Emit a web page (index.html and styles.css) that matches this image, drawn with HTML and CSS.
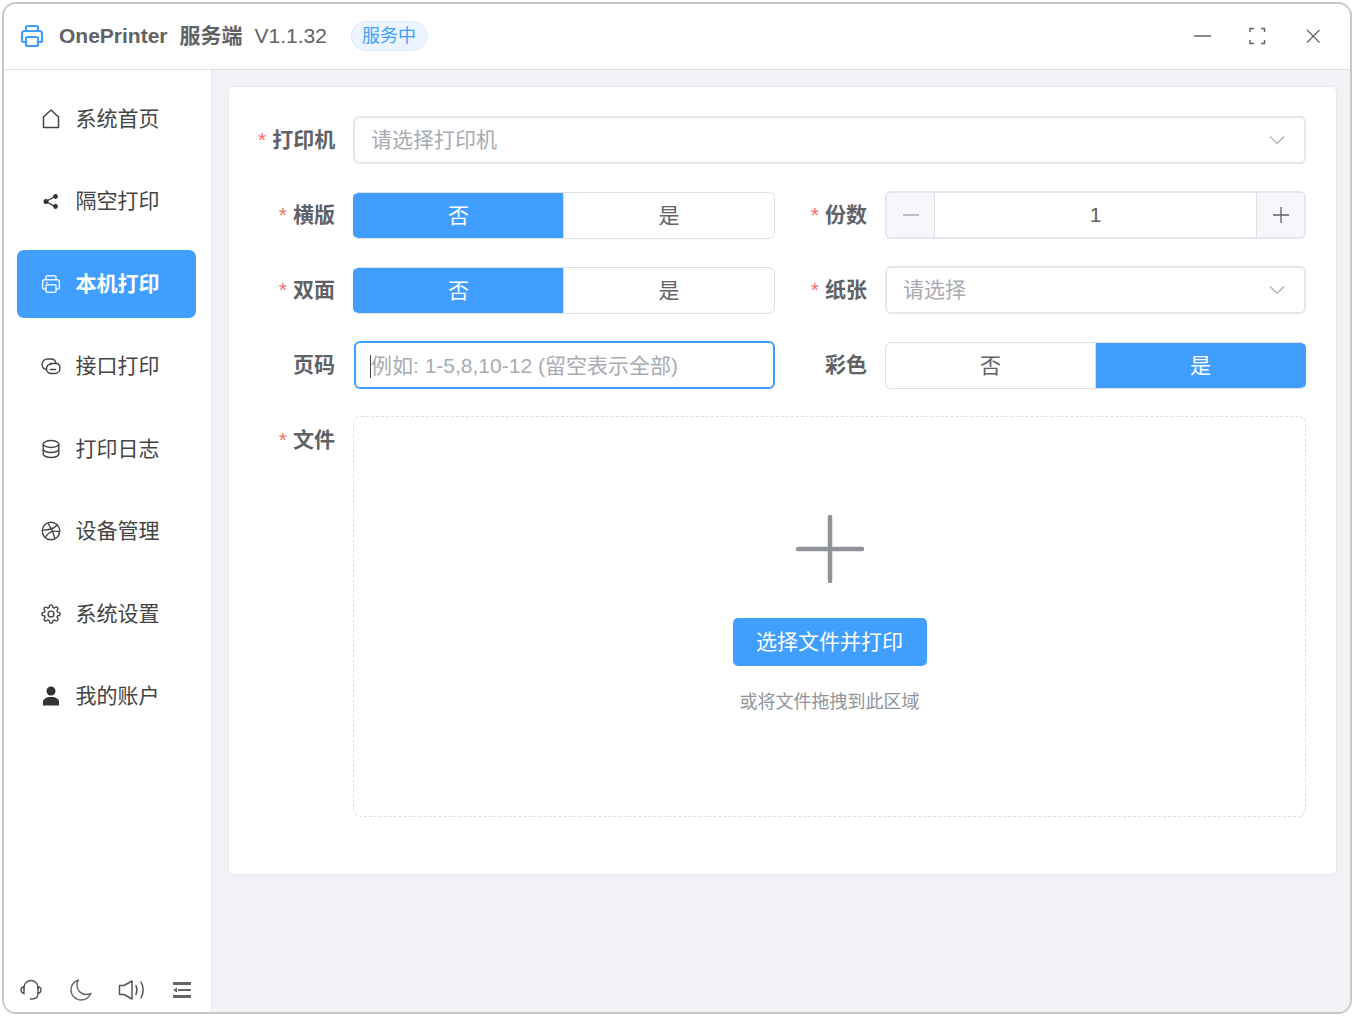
FILE: index.html
```html
<!DOCTYPE html>
<html lang="zh-CN">
<head>
  <meta charset="UTF-8">
  <meta name="viewport" content="width=device-width, initial-scale=1.0">
  <title>OnePrinter 服务端</title>
  <link rel="stylesheet" href="styles.css">
</head>
<body>
  <div class="window">
    <header class="titlebar">
      <svg class="logo" viewBox="0 0 24 24" fill="none" stroke="#409eff" stroke-width="2.2" stroke-linejoin="round" stroke-linecap="round">
        <path d="M6 7V3.500C6 2.700 6.700 2 7.500 2h9c.8 0 1.500.7 1.500 1.500V7"/>
        <path d="M6 18H3.500C2.700 18 2 17.300 2 16.500v-7C2 8.100 3.100 7 4.500 7h15C20.900 7 22 8.100 22 9.500v7c0 .8-.7 1.500-1.500 1.500H18"/>
        <rect x="6" y="13" width="12" height="9" rx="1.500"/>
      </svg>
      <span class="app-name">OnePrinter</span>
      <span class="app-name">服务端</span>
      <span class="version">V1.1.32</span>
      <span class="status-tag">服务中</span>
      <div class="win-controls">
        <svg viewBox="0 0 20 20" fill="none" stroke="#666" stroke-width="1.300"><path d="M3 10h17"/></svg>
        <svg viewBox="0 0 20 20" fill="none" stroke="#666" stroke-width="1.500"><path d="M3 6V2.500h4M14 2.500h3.500V6M17.500 14v3.500H14M7 17.500H3V14"/></svg>
        <svg viewBox="0 0 20 20" fill="none" stroke="#666" stroke-width="1.300"><path d="M4 4l12.500 12.500M16.500 4L4 16.500"/></svg>
      </div>
    </header>

    <div class="body">
      <aside class="sidebar">
        <nav class="nav">
          <a class="nav-item">
            <svg class="nav-icon" viewBox="0 0 20 20" fill="none" stroke="#444" stroke-width="1.500" stroke-linejoin="round"><path d="M2.500 8L10 1l7.500 7v10.500h-15z"/></svg>
            系统首页
          </a>
          <a class="nav-item">
            <svg class="nav-icon" viewBox="0 0 20 20" fill="#333" stroke="#333" stroke-width="1.400"><path d="M14 5.500l-9 5 9 5" fill="none"/><circle cx="14.500" cy="5.500" r="1.700"/><circle cx="5" cy="10.500" r="1.800"/><circle cx="14.500" cy="15.500" r="1.700"/></svg>
            隔空打印
          </a>
          <a class="nav-item active">
            <svg class="nav-icon" viewBox="0 0 24 24" fill="none" stroke="#fff" stroke-opacity=".85" stroke-width="1.800" stroke-linejoin="round"><path d="M6 7V3.500C6 2.700 6.700 2 7.500 2h9c.8 0 1.500.7 1.500 1.500V7"/><path d="M6 18H3.500C2.700 18 2 17.300 2 16.500v-7C2 8.100 3.100 7 4.500 7h15C20.900 7 22 8.100 22 9.500v7c0 .8-.7 1.500-1.500 1.500H18"/><rect x="6" y="13" width="12" height="9" rx="1.500"/><path d="M6 10.500h2"/></svg>
            本机打印
          </a>
          <a class="nav-item">
            <svg class="nav-icon" viewBox="0 0 20 20" fill="none" stroke="#444" stroke-width="1.400" stroke-linecap="round"><path d="M5.500 13.500C3 13 1 11 1 8.200 1 5.200 3.500 3 6.500 3h3.500c2.500 0 4.300 1.500 4.800 3.800"/><path d="M9 7.500h6c2.300 0 4 2 4 4.800 0 3-2.200 5.200-5 5.200h-3.500C7.500 17.500 5.500 15.500 5.500 13c0-2.600 1.800-4.700 4.500-4.800"/><path d="M9.500 13.500h5"/></svg>
            接口打印
          </a>
          <a class="nav-item">
            <svg class="nav-icon" viewBox="0 0 20 20" fill="none" stroke="#444" stroke-width="1.400"><ellipse cx="10" cy="5" rx="7.800" ry="3.500"/><path d="M2.200 5v10c0 2 3.500 3.500 7.800 3.500s7.800-1.500 7.800-3.500V5"/><path d="M2.200 10c0 2 3.500 3.500 7.800 3.500s7.800-1.500 7.800-3.500"/></svg>
            打印日志
          </a>
          <a class="nav-item">
            <svg class="nav-icon" viewBox="0 0 24 24" fill="none" stroke="#444" stroke-width="1.700"><circle cx="12" cy="12" r="10.500"/><path d="M8.560 2.750c4.370 6.030 6.020 9.420 8.030 17.720m2.540-15.380c-3.720 4.350-8.940 5.660-16.880 5.850m19.500 1.900c-3.500-.93-6.630-.82-8.940 0-2.580.92-5.010 2.860-7.440 6.320"/></svg>
            设备管理
          </a>
          <a class="nav-item">
            <svg class="nav-icon" viewBox="0 0 24 24" fill="none" stroke="#444" stroke-width="1.700"><circle cx="12" cy="12" r="3.500"/><path d="M19.400 15a1.650 1.650 0 0 0 .33 1.820l.06.06a2 2 0 0 1 0 2.830 2 2 0 0 1-2.830 0l-.06-.06a1.650 1.650 0 0 0-1.820-.33 1.650 1.650 0 0 0-1 1.510V21a2 2 0 0 1-2 2 2 2 0 0 1-2-2v-.09A1.650 1.650 0 0 0 9 19.400a1.650 1.650 0 0 0-1.820.33l-.06.06a2 2 0 0 1-2.830 0 2 2 0 0 1 0-2.830l.06-.06a1.650 1.650 0 0 0 .33-1.820 1.650 1.650 0 0 0-1.510-1H3a2 2 0 0 1-2-2 2 2 0 0 1 2-2h.09A1.650 1.650 0 0 0 4.600 9a1.650 1.650 0 0 0-.33-1.820l-.06-.06a2 2 0 0 1 0-2.830 2 2 0 0 1 2.830 0l.06.06a1.650 1.650 0 0 0 1.820.33H9a1.650 1.650 0 0 0 1-1.510V3a2 2 0 0 1 2-2 2 2 0 0 1 2 2v.09a1.650 1.650 0 0 0 1 1.510 1.650 1.650 0 0 0 1.820-.33l.06-.06a2 2 0 0 1 2.830 0 2 2 0 0 1 0 2.830l-.06.06a1.650 1.650 0 0 0-.33 1.820V9a1.650 1.650 0 0 0 1.510 1H21a2 2 0 0 1 2 2 2 2 0 0 1-2 2h-.09a1.650 1.650 0 0 0-1.510 1z"/></svg>
            系统设置
          </a>
          <a class="nav-item">
            <svg class="nav-icon" viewBox="0 0 20 20" fill="#333"><circle cx="10" cy="5" r="4.500"/><path d="M2 19.500v-3.500C2 13 5 11 10 11s8 2 8 5v3.500z"/></svg>
            我的账户
          </a>
        </nav>
        <div class="side-foot">
          <svg class="foot-first" viewBox="0 0 22 22" fill="none" stroke="#555" stroke-width="1.400" stroke-linecap="round"><path d="M4 10V8.500a7 7 0 0 1 14 0V10"/><path d="M4 7.500C2.200 8 1 9.500 1 11s1.200 3 3 3.500z"/><path d="M18 7.500c1.800.5 3 2 3 3.500s-1.200 3-3 3.500z"/><path d="M18 14.500c0 3-1.500 5.500-6 5.500h-1.500"/></svg>
          <svg viewBox="0 0 22 22" fill="none" stroke="#666" stroke-width="1.400" stroke-linejoin="round"><path d="M8.500 1C4 2.500 1 6.500 1 11c0 5.500 4.500 10 10 10 4 0 8-2.500 10-6.500-1.500.7-3 1-4.500 1C11 15.500 7 11.500 7 6.500 7 4.500 7.500 2.700 8.500 1z"/></svg>
          <svg class="wide" viewBox="0 0 28 22" fill="none" stroke="#555" stroke-width="1.500" stroke-linejoin="round" stroke-linecap="round"><path d="M1.500 6.500H6L14 2v18l-8-4.500H1.500z"/><path d="M18 6.500c1.200 3 1.200 6 0 9"/><path d="M23 3c2.700 5 2.700 11 0 16"/></svg>
          <svg viewBox="0 0 22 22" fill="#666"><rect x="1" y="3" width="18" height="3"/><rect x="6" y="10" width="13" height="2"/><path d="M1 11L5 8.500v5z"/><rect x="1" y="16" width="18" height="3"/></svg>
        </div>
      </aside>

      <main class="main">
        <section class="card">
          <form class="form">
            <label class="label req">打印机</label>
            <div class="select span-all">
              <span class="placeholder">请选择打印机</span>
              <svg class="chevron" viewBox="0 0 16 10" fill="none" stroke="#aaa" stroke-width="1.200"><path d="M1 1.500l7 7 7-7"/></svg>
            </div>

            <label class="label req">横版</label>
            <div class="toggle">
              <span class="seg on">否</span>
              <span class="seg">是</span>
            </div>
            <label class="label req">份数</label>
            <div class="stepper">
              <span class="step off">
                <svg viewBox="0 0 18 18" stroke="#a8abb2" stroke-width="1.300"><path d="M1 9h16"/></svg>
              </span>
              <span class="step-value">1</span>
              <span class="step plus">
                <svg viewBox="0 0 18 18" stroke="#606266" stroke-width="1.300"><path d="M1 9h16M9 1v16"/></svg>
              </span>
            </div>

            <label class="label req">双面</label>
            <div class="toggle">
              <span class="seg on">否</span>
              <span class="seg">是</span>
            </div>
            <label class="label req">纸张</label>
            <div class="select">
              <span class="placeholder">请选择</span>
              <svg class="chevron" viewBox="0 0 16 10" fill="none" stroke="#aaa" stroke-width="1.200"><path d="M1 1.500l7 7 7-7"/></svg>
            </div>

            <label class="label">页码</label>
            <div class="text-input">
              <span class="caret"></span>
              <span class="placeholder">例如: 1-5,8,10-12 (留空表示全部)</span>
            </div>
            <label class="label">彩色</label>
            <div class="toggle">
              <span class="seg">否</span>
              <span class="seg on">是</span>
            </div>

            <label class="label req file-label">文件</label>
            <div class="upload span-all">
              <svg class="upload-plus" viewBox="0 0 68 68" fill="none" stroke="#909399" stroke-width="4.500" stroke-linecap="round"><path d="M2 34h64M34 2v64"/></svg>
              <button class="pick-btn" type="button">选择文件并打印</button>
              <p class="upload-hint">或将文件拖拽到此区域</p>
            </div>
          </form>
        </section>
      </main>
    </div>
  </div>
</body>
</html>
```

FILE: styles.css
```css
* {
  box-sizing: border-box;
}

html, body {
  margin: 0;
  padding: 0;
  background: #fff;
}

body {
  font-family: "Liberation Sans", "Noto Sans CJK SC", sans-serif;
  line-height: 1.2;
  color: #444;
}

.window {
  margin: 2px 0 0 2px;
  width: 1350px;
  height: 1012px;
  border: 2px solid #c9c9c9;
  border-radius: 14px;
  overflow: hidden;
  display: flex;
  flex-direction: column;
}

.titlebar {
  height: 66px;
  flex: none;
  display: flex;
  align-items: center;
  padding: 0 0 2px 16px;
  border-bottom: 1px solid #dcdfe6;
  background: #fff;
}

.logo {
  width: 24px;
  height: 24px;
  margin: 1px 15px 0 0;
}

.app-name {
  font-size: 21px;
  font-weight: 700;
  color: #606266;
  margin-right: 12px;
}

.version {
  font-size: 21px;
  color: #606266;
}

.status-tag {
  margin-left: 24px;
  height: 30px;
  display: flex;
  align-items: center;
  padding: 2px 11px 0 10px;
  font-size: 18px;
  color: #409eff;
  background: #ecf5ff;
  border: 1px solid #d9ecff;
  border-radius: 15px;
}

.win-controls {
  margin-left: auto;
  margin-right: 27px;
  display: flex;
  gap: 36px;
}

.win-controls svg {
  width: 20px;
  height: 20px;
}

.body {
  flex: 1;
  display: flex;
  min-height: 0;
}

.sidebar {
  width: 208px;
  flex: none;
  display: flex;
  flex-direction: column;
  padding: 14.55px 15px 0 13px;
  border-right: 1px solid #e4e7ed;
  background: #fff;
}

.nav {
  display: flex;
  flex-direction: column;
  gap: 14.5px;
}

.nav-item {
  height: 68px;
  display: flex;
  align-items: center;
  gap: 14.5px;
  padding-left: 24px;
  border-radius: 7px;
  font-size: 21px;
  color: #444;
}

.nav-item.active {
  background: #409eff;
  color: #fff;
  font-weight: 700;
}

.nav-icon {
  width: 20px;
  height: 20px;
  flex: none;
}

.side-foot {
  margin-top: auto;
  height: 33px;
  padding-left: 3px;
  display: flex;
  align-items: flex-start;
  gap: 26px;
}

.side-foot svg {
  width: 22px;
  height: 22px;
  flex: none;
}

.side-foot svg.wide {
  width: 28px;
}

.side-foot svg.foot-first {
  margin-right: 2px;
}

.main {
  flex: 1;
  padding: 16px 14px 0 16px;
  background: #f0f2f5;
}

.card {
  height: 789px;
  padding: 29px 30px 0 29px;
  background: #fff;
  border: 1px solid #e6e8ee;
  border-radius: 6px;
}

.form {
  display: grid;
  grid-template-columns: 77px 422px 74px 421px;
  grid-template-rows: 48px 48px 48px 48px 401px;
  column-gap: 18px;
  row-gap: 27px;
  align-items: center;
}

.label {
  font-size: 21px;
  font-weight: 700;
  color: #606266;
  text-align: right;
  white-space: nowrap;
}

.label.req::before {
  content: "*";
  color: #f56c6c;
  margin-right: 6px;
  font-weight: 400;
}

.file-label {
  align-self: start;
  margin-top: 11px;
}

.span-all {
  grid-column: 2 / -1;
}

.select,
.text-input {
  height: 48px;
  display: flex;
  align-items: center;
  padding: 0 18px 0 16px;
  border: 2px solid #e4e7ed;
  border-radius: 6px;
  font-size: 21px;
  background: #fff;
}

.select {
  justify-content: space-between;
}

.placeholder {
  color: #a8abb2;
}

.chevron {
  width: 16px;
  height: 10px;
  margin-right: 1px;
}

.text-input {
  margin-left: 1px;
  padding: 2px 18px 0 14px;
  border-color: #409eff;
}

.caret {
  width: 1px;
  height: 23px;
  background: #444;
}

.toggle {
  height: 47px;
  display: flex;
}

.seg {
  flex: 1;
  display: flex;
  align-items: center;
  justify-content: center;
  padding-top: 2px;
  font-size: 21px;
  color: #606266;
  border: 1px solid #dcdfe6;
}

.seg:first-child {
  flex: 0 0 210px;
  border-right: none;
  border-radius: 6px 0 0 6px;
}

.seg:last-child {
  border-radius: 0 6px 6px 0;
}

.seg.on {
  background: #409eff;
  color: #fff;
}

.seg.on:first-child {
  border-left-color: #409eff;
}

.seg.on:last-child {
  border-right-color: #409eff;
}

.stepper {
  height: 48px;
  display: flex;
  border: 2px solid #e4e7ed;
  border-radius: 6px;
  overflow: hidden;
}

.step {
  width: 48px;
  flex: none;
  display: flex;
  align-items: center;
  justify-content: center;
  background: #f5f7fa;
}

.step.off {
  border-right: 1px solid #dcdfe6;
}

.step.plus {
  border-left: 1px solid #dcdfe6;
}

.step svg {
  width: 18px;
  height: 18px;
}

.step-value {
  flex: 1;
  text-align: center;
  line-height: 44px;
  font-size: 21px;
  color: #606266;
}

.upload {
  height: 401px;
  display: flex;
  flex-direction: column;
  align-items: center;
  padding-top: 98px;
  border: 1px dashed #dcdfe6;
  border-radius: 8px;
}

.upload-plus {
  width: 68px;
  height: 68px;
}

.pick-btn {
  margin-top: 35px;
  width: 194px;
  height: 48px;
  border: none;
  border-radius: 5px;
  background: #409eff;
  color: #fff;
  font-family: inherit;
  font-size: 21px;
  line-height: inherit;
}

.upload-hint {
  margin: 26px 0 0;
  font-size: 18px;
  color: #909399;
}
```
